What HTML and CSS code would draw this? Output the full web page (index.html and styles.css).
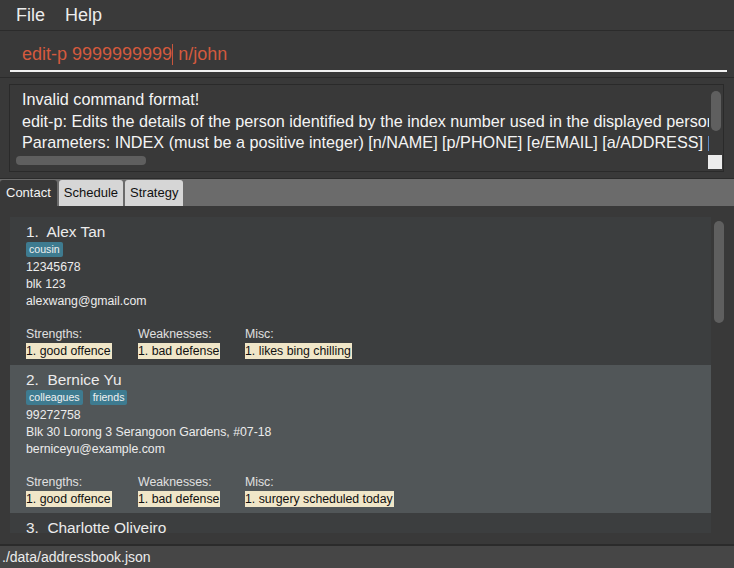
FILE: index.html
```html
<!DOCTYPE html>
<html>
<head>
<meta charset="utf-8">
<link rel="stylesheet" href="styles.css">
</head>
<body>
<div class="app">
  <div class="menubar">
    <span class="menu-item">File</span>
    <span class="menu-item">Help</span>
  </div>
  <div class="command">
    <div class="command-text">edit-p 9999999999<span class="caret"></span> n/john</div>
    <div class="underline"></div>
  </div>
  <div class="result-wrap">
    <div class="result">
      <div class="result-lines">
        <div class="rline">Invalid command format!</div>
        <div class="rline">edit-p: Edits the details of the person identified by the index number used in the displayed person list.</div>
        <div class="rline">Parameters: INDEX (must be a positive integer) [n/NAME] [p/PHONE] [e/EMAIL] [a/ADDRESS] [t/TAG]...</div>
      </div>
      <div class="vscroll"><div class="vthumb"></div></div>
      <div class="hscroll"><div class="hthumb"></div></div>
      <div class="corner"></div>
    </div>
  </div>
  <div class="tabpane">
    <div class="tabbar">
      <div class="tab active">Contact</div>
      <div class="tab">Schedule</div>
      <div class="tab">Strategy</div>
    </div>
    <div class="tabcontent">
      <div class="list">
        <div class="card">
          <div class="name">1.&nbsp; Alex Tan</div>
          <div class="tags"><span class="tag">cousin</span></div>
          <div class="field">12345678</div>
          <div class="field">blk 123</div>
          <div class="field">alexwang@gmail.com</div>
          <div class="notes">
            <div class="note-col c1"><div class="note-label">Strengths:</div><span class="hl">1. good offence</span></div>
            <div class="note-col c2"><div class="note-label">Weaknesses:</div><span class="hl">1. bad defense</span></div>
            <div class="note-col"><div class="note-label">Misc:</div><span class="hl">1. likes bing chilling</span></div>
          </div>
        </div>
        <div class="card selected">
          <div class="name">2.&nbsp; Bernice Yu</div>
          <div class="tags"><span class="tag">colleagues</span><span class="tag">friends</span></div>
          <div class="field">99272758</div>
          <div class="field">Blk 30 Lorong 3 Serangoon Gardens, #07-18</div>
          <div class="field">berniceyu@example.com</div>
          <div class="notes">
            <div class="note-col c1"><div class="note-label">Strengths:</div><span class="hl">1. good offence</span></div>
            <div class="note-col c2"><div class="note-label">Weaknesses:</div><span class="hl">1. bad defense</span></div>
            <div class="note-col"><div class="note-label">Misc:</div><span class="hl">1. surgery scheduled today</span></div>
          </div>
        </div>
        <div class="card">
          <div class="name">3.&nbsp; Charlotte Oliveiro</div>
        </div>
      </div>
      <div class="listscroll"><div class="listthumb"></div></div>
    </div>
  </div>
  <div class="statusbar">./data/addressbook.json</div>
</div>
</body>
</html>
```
FILE: styles.css
```css
* { box-sizing: border-box; }
html, body { margin: 0; padding: 0; }
body {
  width: 734px;
  height: 568px;
  overflow: hidden;
  background: #393939;
  font-family: "Liberation Sans", Arial, sans-serif;
  color: #e8e8e8;
}
.app {
  display: flex;
  flex-direction: column;
  height: 568px;
}
.menubar {
  height: 31px;
  flex: none;
  display: flex;
  align-items: center;
  padding-left: 16px;
  gap: 20px;
  background: #3a3a3a;
  border-bottom: 1px solid #2b2b2b;
}
.menu-item {
  font-size: 18px;
  color: #ececec;
}
.command {
  height: 47px;
  flex: none;
  padding: 0 7px 0 10px;
  display: flex;
  flex-direction: column;
  justify-content: flex-end;
  border-bottom: 1px solid #2b2b2b;
}
.command-text {
  font-size: 18px;
  color: #d45a3e;
  padding-left: 12px;
  height: 27px;
  line-height: 22px;
  white-space: nowrap;
}
.caret {
  display: inline-block;
  width: 1px;
  height: 21px;
  vertical-align: -5px;
  background: #c9553c;
  margin-left: 0;
}
.underline {
  height: 2px;
  background: #f2f2f2;
  margin-bottom: 5px;
}
.result-wrap {
  flex: none;
  height: 101px;
  padding: 6px 10px 7px 9px;
  border-bottom: 1px solid #2b2b2b;
}
.result {
  position: relative;
  height: 88px;
  border: 1px solid #2a2a2a;
  background: #393939;
  overflow: hidden;
}
.result-lines {
  padding: 4px 0 0 12px;
  white-space: nowrap;
  width: 699px;
  overflow: hidden;
}
.rline {
  font-size: 16.2px;
  line-height: 21.5px;
  color: #f4f4f4;
}
.vscroll {
  position: absolute;
  right: 2px;
  top: 6px;
  width: 10px;
  height: 62px;
}
.vthumb {
  width: 10px;
  height: 40px;
  border-radius: 5px;
  background: #5f5f5f;
}
.hscroll {
  position: absolute;
  left: 6px;
  bottom: 6px;
  width: 690px;
  height: 9px;
}
.hthumb {
  width: 130px;
  height: 9px;
  border-radius: 4px;
  background: #5f5f5f;
}
.corner {
  position: absolute;
  right: 1px;
  bottom: 2px;
  width: 14px;
  height: 14px;
  background: #ececec;
}
.tabpane {
  flex: 1;
  display: flex;
  flex-direction: column;
  min-height: 0;
}
.tabbar {
  height: 27px;
  flex: none;
  background: #6b6b6b;
  display: flex;
  align-items: flex-end;
  gap: 2px;
  padding-top: 1px;
}
.tab {
  height: 26px;
  padding: 0 5px;
  font-size: 13px;
  line-height: 26px;
  background: #d6d6d6;
  color: #111;
  border-radius: 3px 3px 0 0;
}
.tab.active {
  background: #393939;
  color: #f4f4f4;
  padding: 0 6px;
}
.tabcontent {
  flex: 1;
  min-height: 0;
  display: flex;
  padding: 11px 10px 11px 10px;
  gap: 3px;
  background: #393939;
}
.list {
  flex: 1;
  background: #3c3e3f;
  overflow: hidden;
}
.card {
  height: 148px;
  padding: 5px 16px 0 16px;
  background: #3c3e3f;
}
.card.selected {
  background: #515658;
}
.name {
  font-size: 15.4px;
  line-height: 20px;
  color: #ececec;
}
.tags {
  display: flex;
  gap: 7px;
  height: 16px;
  margin-top: 0;
  margin-bottom: 1px;
}
.tag {
  background: #3e7b90;
  color: #f0f0f0;
  font-size: 10.6px;
  line-height: 15px;
  height: 15px;
  padding: 0 3px;
  border-radius: 2px;
}
.field {
  font-size: 12.3px;
  line-height: 17px;
  color: #ececec;
}
.notes {
  display: flex;
  margin-top: 16px;
}
.note-col {
  display: flex;
  flex-direction: column;
  align-items: flex-start;
}
.note-col.c1 { width: 112px; }
.note-col.c2 { width: 107px; }
.note-label {
  font-size: 12.3px;
  line-height: 17px;
  color: #e0e0e0;
}
.hl {
  background: #f0e6c8;
  color: #111;
  font-size: 12.3px;
  line-height: 16px;
  padding: 0 1px 0 0;
}
.listscroll {
  width: 10px;
  flex: none;
  padding-top: 4px;
}
.listthumb {
  width: 10px;
  height: 102px;
  border-radius: 5px;
  background: #5f5f5f;
}
.statusbar {
  height: 24px;
  flex: none;
  background: #464646;
  border-top: 2px solid #2b2b2b;
  font-size: 14px;
  line-height: 22px;
  padding-left: 2px;
  color: #ececec;
}
```
